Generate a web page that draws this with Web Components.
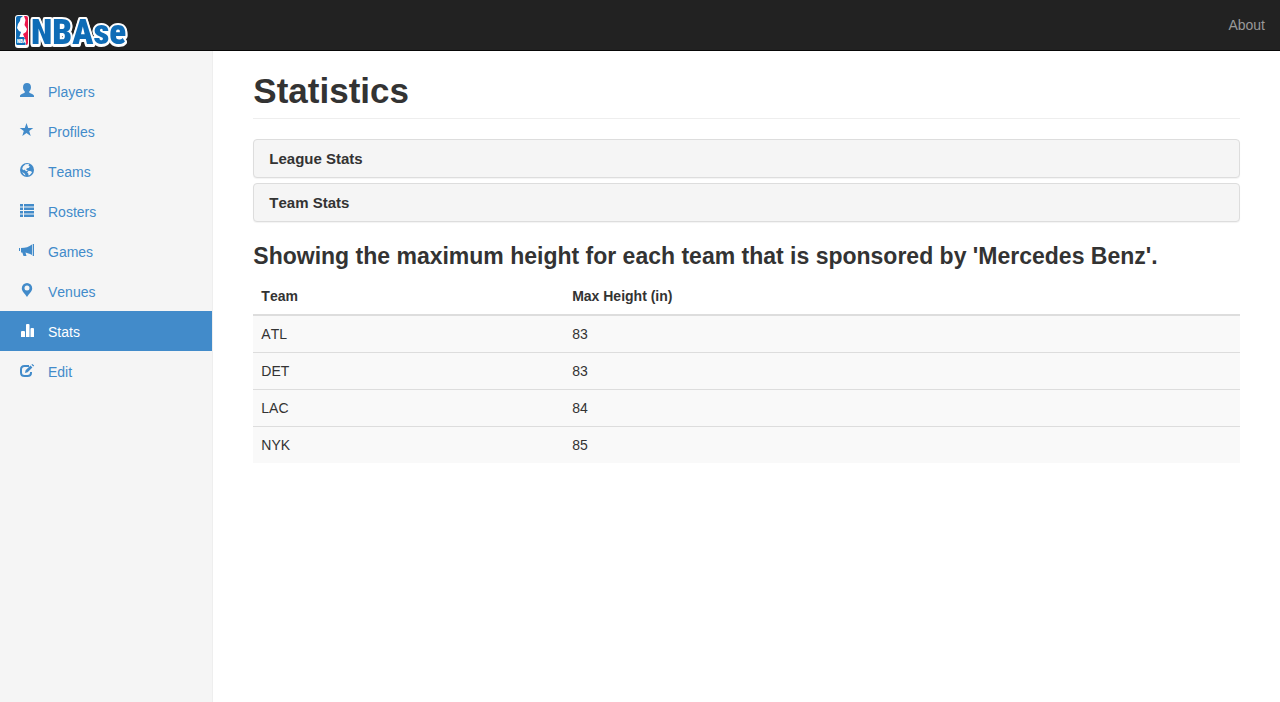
<!DOCTYPE html>
<html lang="en">
<head>
<meta charset="utf-8">
<meta name="viewport" content="width=device-width, initial-scale=1">
<title>NBAse - Statistics</title>
<style>
  body {
    margin: 0;
    background: #fff;
    color: #333;
    font: 14px/20px "Liberation Sans", Arial, sans-serif;
    font-kerning: none;
  }
</style>
</head>
<body>
<nbase-app>
  <nbase-navbar slot="top"></nbase-navbar>
  <nbase-sidebar slot="side">
    <nbase-link href="#players" icon="user">Players</nbase-link>
    <nbase-link href="#profiles" icon="star">Profiles</nbase-link>
    <nbase-link href="#teams" icon="globe">Teams</nbase-link>
    <nbase-link href="#rosters" icon="list">Rosters</nbase-link>
    <nbase-link href="#games" icon="horn">Games</nbase-link>
    <nbase-link href="#venues" icon="pin">Venues</nbase-link>
    <nbase-link href="#stats" icon="stats" active>Stats</nbase-link>
    <nbase-link href="#edit" icon="edit">Edit</nbase-link>
  </nbase-sidebar>
  <nbase-heading>Statistics</nbase-heading>
  <nbase-panel>League Stats</nbase-panel>
  <nbase-panel>Team Stats</nbase-panel>
  <nbase-results>Showing the maximum height for each team that is sponsored by 'Mercedes Benz'.</nbase-results>
</nbase-app>

<script>
  const define = (name, html, setup) => {
    const template = document.createElement('template');
    template.innerHTML = html;
    customElements.define(name, class extends HTMLElement {
      constructor() {
        super();
        this.attachShadow({ mode: 'open' }).append(template.content.cloneNode(true));
      }
      connectedCallback() {
        if (setup) setup(this, this.shadowRoot);
      }
    });
  };

  const icons = {
    user: '<path d="M7 0C9.500 0 11 1.600 11 4.200C11 6 10.200 7.600 9.200 8.500V9.500C9.500 10.300 14 11 14 13V14H0V13C0 11 4.500 10.300 4.800 9.500V8.500C3.800 7.600 3 6 3 4.200C3 1.600 4.500 0 7 0Z"/>',
    star: '<path d="M6.500 0L8.200 4.900H13.300L9.200 8L10.700 13L6.500 10L2.300 13L3.800 8L-.3 4.900H4.800Z"/>',
    globe: '<circle cx="7" cy="7" r="7"/><path fill="#f5f5f5" d="M5.500 1.200L9 1L8.500 2.400L9.800 3.500L8.600 5L7 5.200L6 6.500L7.800 7.200L6.800 8.200L5.200 7.500L4.200 6.600L3.200 7.300L2.200 5.800L3 3.400ZM8.500 7.800L11.200 8.300L12 9.600L9.800 12L8.500 12.600L8.300 10.600L7.200 9.500ZM2 9L4 11.800L5.600 12.500L4.500 10.400Z"/>',
    list: '<path d="M0 1H3V3.500H0ZM4 1H14V3.500H4ZM0 4.500H3V7H0ZM4 4.500H14V7H4ZM0 8H3V10.500H0ZM4 8H14V10.500H4ZM0 11.500H3V14H0ZM4 11.500H14V14H4Z"/>',
    horn: '<path d="M-1 5H0V8H-1ZM1 5C5.500 5 9 4 12 1.500V12C9.500 10.700 7.500 9.900 5.500 9.500L6.500 13H3.500L2.300 9.500H1ZM12.700 1H14V13H12.700Z"/>',
    pin: '<path fill-rule="evenodd" d="M7 0A5.200 5.200 0 0 1 12.200 5.200C12.200 8.500 9.200 10.400 7 14C4.800 10.400 1.800 8.500 1.800 5.200A5.200 5.200 0 0 1 7 0ZM7 2.600A2.500 2.500 0 1 0 7 7.600A2.500 2.500 0 1 0 7 2.600Z"/>',
    stats: '<path d="M1 9Q1 8 2 8H4Q5 8 5 9V14H1ZM6 2Q6 1 7 1H8.500Q9.500 1 9.500 2V14H6ZM10.500 6Q10.500 5 11.500 5H13Q14 5 14 6V14H10.500Z"/>',
    edit: '<path fill="none" stroke="currentColor" stroke-width="2" d="M9 3H4.500Q1 3 1 6.500V9.500Q1 13 4.500 13H7.500Q11 13 11 10V9"/><path d="M5 10L5.600 7.300L10.500 2.600L12.400 4.400L7.600 9.300ZM11.400 1.700L12.300 .9L14.200 2.500L13.300 3.500Z"/>'
  };

  define('nbase-app', `
    <style>
      :host { display: flex; flex-direction: column; min-height: 100vh; }
      .body { flex: 1; display: grid; grid-template-columns: 1fr 5fr; }
      main { min-width: 0; padding: 20px 40px; }
    </style>
    <slot name="top"></slot>
    <div class="body"><slot name="side"></slot><main><slot></slot></main></div>`);

  define('nbase-navbar', `
    <style>
      :host { display: block; background: #222; border-bottom: 1px solid #080808; }
      nav { display: flex; justify-content: space-between; align-items: center; height: 50px; padding: 0 15px; }
      a { color: #999; text-decoration: none; }
      .brand { display: flex; padding-top: 14px; }
      svg { display: block; overflow: visible; }
      text { font-family: "Roboto Condensed", "Open Sans Condensed", Roboto, sans-serif; font-weight: 900; }
      .word { fill: #0f6cb6; stroke: #fff; stroke-width: 4px; stroke-linejoin: round; paint-order: stroke; filter: drop-shadow(0 1px 0 #fff); }
    </style>
    <nav>
      <a class="brand" href="#home" aria-label="NBAse">
        <svg width="110" height="36" viewBox="0 0 110 36">
          <rect y="1" width="14" height="33" rx="3" fill="#fff"/>
          <g transform="translate(0 1)">
            <path fill="#0f6cb6" d="M3 1H8L5.500 3L5 6L3 9L2 13L4 16L6 17L4 23V30H3Q1 30 1 28V3Q1 1 3 1Z"/>
            <path fill="#ed174c" d="M9 1H11Q13 1 13 3V28Q13 30 11 30L10.500 25L8 19L11 17L12 14L9.500 10L10.500 5Z"/>
            <path fill="#0f6cb6" d="M1 22H9L10.500 25V30H3Q1 30 1 28Z"/>
            <text x="2" y="28" font-size="5" fill="#fff">NBA</text>
          </g>
          <text class="word" x="16" y="30" font-size="35">NBAse</text>
        </svg>
      </a>
      <a href="#about">About</a>
    </nav>`);

  define('nbase-sidebar', `
    <style>
      :host { display: block; box-sizing: border-box; padding: 20px 0; background: #f5f5f5; border-right: 1px solid #eee; }
    </style>
    <nav aria-label="Sections"><slot></slot></nav>`);

  define('nbase-link', `
    <style>
      :host { display: block; color: #428bca; }
      :host([active]) { background: #428bca; color: #fff; }
      a { display: flex; gap: 14px; padding: 10px 20px; color: inherit; text-decoration: none; }
      svg { display: block; width: 14px; height: 14px; margin-top: 2px; overflow: visible; fill: currentColor; }
      span { padding-top: 1px; height: 19px; }
    </style>
    <a><svg viewBox="0 0 14 14" aria-hidden="true"></svg><span><slot></slot></span></a>`,
    (host, root) => {
      root.querySelector('a').setAttribute('href', host.getAttribute('href'));
      root.querySelector('svg').innerHTML = icons[host.getAttribute('icon')];
      if (host.hasAttribute('active')) root.querySelector('a').setAttribute('aria-current', 'page');
    });

  define('nbase-heading', `
    <style>
      :host { display: block; margin-bottom: 20px; border-bottom: 1px solid #eee; }
      h1 { margin: 0; padding-bottom: 8px; font-size: 35px; line-height: 39px; font-weight: 700; }
    </style>
    <h1><slot></slot></h1>`);

  define('nbase-panel', `
    <style>
      :host { display: block; margin-bottom: 5px; }
      h4 { margin: 0; }
      button {
        display: block; box-sizing: border-box; width: 100%; padding: 10px 15px;
        border: 1px solid #ddd; border-radius: 4px; background: #f5f5f5;
        box-shadow: 0 1px 1px rgba(0, 0, 0, .05);
        color: inherit; font: 700 15px/17px "Liberation Sans", Arial, sans-serif; font-kerning: none;
        text-align: left; cursor: pointer;
      }
    </style>
    <h4><button type="button" aria-expanded="false"><slot></slot></button></h4>`);

  define('nbase-results', `
    <style>
      :host { display: block; padding-top: 16px; }
      h3 { margin: 0 0 9px; font-size: 23px; line-height: 26px; font-weight: 700; }
      table { width: 100%; border-collapse: separate; border-spacing: 0; }
      th, td { padding: 8px; text-align: left; }
      th { border-bottom: 2px solid #ddd; }
      th:first-child { width: 31.5%; }
      td { background: #f9f9f9; }
      tr + tr td { border-top: 1px solid #ddd; }
    </style>
    <h3 id="caption"><slot></slot></h3>
    <table aria-labelledby="caption">
      <thead><tr><th scope="col">Team</th><th scope="col">Max Height (in)</th></tr></thead>
      <tbody>
        <tr><td>ATL</td><td>83</td></tr>
        <tr><td>DET</td><td>83</td></tr>
        <tr><td>LAC</td><td>84</td></tr>
        <tr><td>NYK</td><td>85</td></tr>
      </tbody>
    </table>`);
</script>
</body>
</html>
